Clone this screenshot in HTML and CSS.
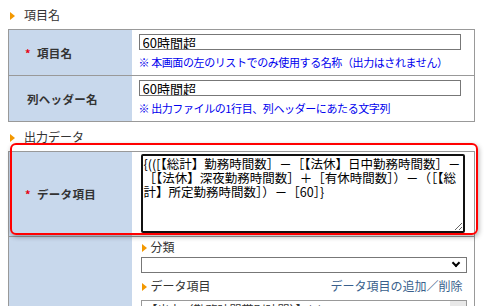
FILE: index.html
```html
<!DOCTYPE html>
<html lang="ja">
<head>
    <meta charset="UTF-8">
    <title>項目設定</title>
    <link rel="stylesheet" href="styles.css">
</head>
<body>
    <div class="page">
        <h2 class="sec-title">項目名</h2>
        <table class="form-table">
            <colgroup><col class="col-head"><col></colgroup>
            <tr>
                <th class="with-req"><span class="req">*</span>項目名</th>
                <td>
                    <input type="text" class="text-box" value="60時間超">
                    <p class="note">※ 本画面の左のリストでのみ使用する名称（出力はされません）</p>
                </td>
            </tr>
            <tr>
                <th>列ヘッダー名</th>
                <td>
                    <input type="text" class="text-box" value="60時間超">
                    <p class="note">※ 出力ファイルの1行目、列ヘッダーにあたる文字列</p>
                </td>
            </tr>
        </table>

        <h2 class="sec-title">出力データ</h2>
        <table class="form-table data-table">
            <colgroup><col class="col-head"><col></colgroup>
            <tr>
                <th class="with-req data-head"><span class="req">*</span>データ項目</th>
                <td class="formula-cell">
                    <textarea class="formula" readonly>{(([【総計】勤務時間数］－［【法休】日中勤務時間数］－［【法休】深夜勤務時間数］＋［有休時間数］）－（［【総計】所定勤務時間数］）－［60］}</textarea>
                </td>
            </tr>
            <tr>
                <th></th>
                <td class="picker">
                    <h3 class="sub-title">分類</h3>
                    <div class="select-box"><span class="chevron"></span></div>
                    <div class="sub-row">
                        <h3 class="sub-title">データ項目</h3>
                        <a href="#" class="edit-link">データ項目の追加／削除</a>
                    </div>
                    <div class="list-box">【出力（勤務時間帯別時間）】(0)</div>
                </td>
            </tr>
        </table>
        <div class="highlight"></div>
    </div>
</body>
</html>
```

FILE: styles.css
```css
* {
    margin: 0;
    padding: 0;
    box-sizing: border-box;
}

body {
    background: #fff;
    font-family: "Noto Sans CJK JP", "Noto Sans", sans-serif;
    font-size: 12px;
    color: #333;
    overflow: hidden;
}

.page {
    position: relative;
    padding: 0 25px 0 8px;
}

.sec-title {
    font-size: 12px;
    font-weight: normal;
    line-height: 14px;
    padding: 8px 0 7px 16px;
    position: relative;
}

.sec-title::before,
.sub-title::before {
    content: "";
    position: absolute;
    left: 2px;
    top: 12px;
    border-left: 5px solid #f39800;
    border-top: 4px solid transparent;
    border-bottom: 4px solid transparent;
}

.form-table {
    width: 467px;
    table-layout: fixed;
    border-collapse: collapse;
    border: 1px solid #999;
}

.col-head {
    width: 123px;
}

.form-table th {
    position: relative;
    background: #c8d8ec;
    font-weight: bold;
    font-size: 11.5px;
    color: #333;
    text-align: left;
    padding-left: 18px;
    border-bottom: 1px solid #999;
    letter-spacing: 0.3px;
}

.form-table th.with-req {
    padding-left: 28px;
}

.form-table td {
    padding: 4px 14px 6px 7px;
    border-bottom: 1px solid #999;
    vertical-align: top;
}

.req {
    position: absolute;
    left: 16px;
    color: #e60012;
    font-size: 11px;
}

.text-box {
    display: block;
    width: 322px;
    height: 16px;
    border: 1px solid #777;
    font-family: "Noto Sans CJK JP", sans-serif;
    font-size: 13px;
    line-height: 14px;
    padding: 0 3px;
    color: #000;
}

.note {
    color: #0000ee;
    font-size: 11px;
    letter-spacing: -0.4px;
    line-height: 14px;
    margin-top: 5px;
    white-space: nowrap;
}

.data-table .formula-cell {
    padding: 2px 10px 3px 9px;
}

.data-head {
    height: 84px;
}

.formula {
    display: block;
    width: 324px;
    height: 79px;
    border: 2px solid #111;
    border-radius: 2px;
    font-family: "Noto Sans CJK JP", sans-serif;
    font-size: 12.5px;
    line-height: 14px;
    padding: 1px 1px;
    color: #000;
    resize: both;
    outline: none;
}

.data-table tr:last-child th,
.data-table tr:last-child td {
    border-bottom: none;
}

.data-table .picker {
    height: 80px;
    padding: 3px 8px 0 9px;
}

.sub-title {
    position: relative;
    font-size: 12px;
    font-weight: normal;
    line-height: 14px;
    padding: 0 0 0 10px;
    color: #333;
}

.sub-title::before {
    left: 1px;
    top: 4px;
}

.select-box {
    position: relative;
    width: 326px;
    height: 16px;
    border: 1px solid #777;
    margin-top: 3px;
}

.chevron {
    position: absolute;
    right: 7px;
    top: 2px;
    width: 6px;
    height: 6px;
    border-right: 2px solid #000;
    border-bottom: 2px solid #000;
    transform: rotate(45deg);
}

.sub-row {
    display: flex;
    justify-content: space-between;
    align-items: center;
    margin-top: 4px;
    width: 326px;
}

.edit-link {
    color: #3a5f8c;
    text-decoration: none;
    font-size: 12px;
    padding-right: 4px;
}

.list-box {
    width: 326px;
    height: 30px;
    border: 1px solid #999;
    margin-top: 6px;
    padding: 0 4px;
    font-size: 12px;
    line-height: 18px;
    color: #333;
    background: linear-gradient(to left, #e8e8e8 16px, #fff 16px);
}

.highlight {
    position: absolute;
    left: 10px;
    top: 143px;
    width: 468px;
    height: 92px;
    border: 2px solid #f00;
    border-radius: 6px;
    box-shadow: 1px 2px 5px rgba(0, 0, 0, 0.3);
    pointer-events: none;
}
```
